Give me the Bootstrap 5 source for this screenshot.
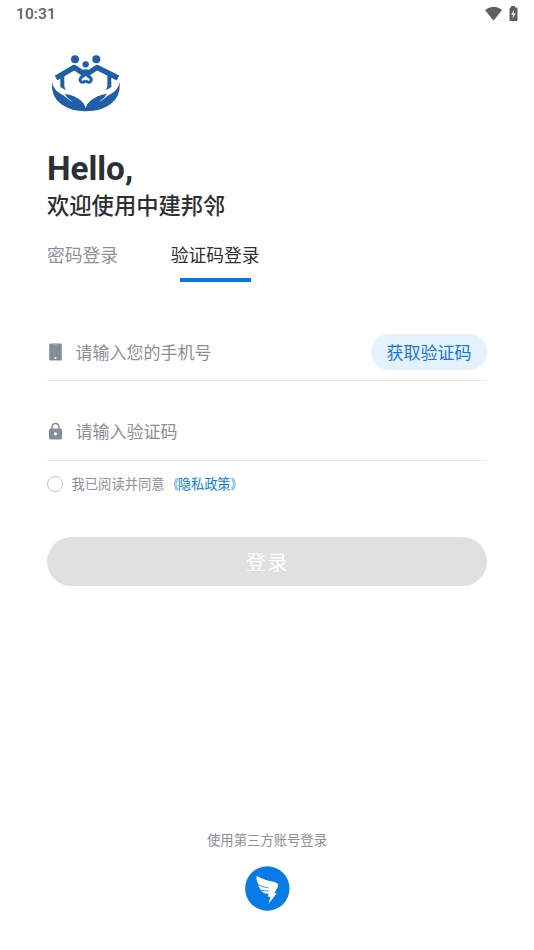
<!DOCTYPE html>
<html lang="zh-CN">
<head>
<meta charset="utf-8">
<meta name="viewport" content="width=device-width, initial-scale=1">
<title>登录</title>
<link href="https://cdn.jsdelivr.net/npm/bootstrap@5.3.0/dist/css/bootstrap.min.css" rel="stylesheet">
<style>
body{font-family:Roboto,"Noto Sans CJK SC",sans-serif;color:#2d2f35;background:#fff}
.screen{height:950px;overflow:hidden}
.status{height:28px;padding:0 15px 0 16px;color:#5f5f5f;font-size:15.5px;font-weight:500;letter-spacing:.1px}
.status .clock{padding-top:2px}
.content-area{padding:22px 47px 0}
.logo{width:77px;height:65px;display:block}
.hello{font-size:33.3px;font-weight:700;line-height:42px;margin-top:33px}
.welcome{font-size:22.3px;font-weight:500;line-height:32px}
.tabs{margin-top:18px;gap:52.6px}
.tab-btn{font-size:17.8px;line-height:32px;height:42px;color:#8a919d;white-space:nowrap}
.tab-btn.active{color:#2d2f35}
.tab-btn.active::after{content:"";display:block;width:71px;height:4px;margin:6px auto 0;background:#0a76e0}
.field{height:57px;border-bottom:1.5px solid #e9eaec}
.phone-field{margin-top:42px}
.code-field{margin-top:23px}
.field svg{width:18px;height:20px;flex:none}
.field input{font-size:17px;line-height:24px;margin-left:10.5px;padding:2px 0 0;color:#2d2f35}
.code-field input{padding-top:0}
.field input::placeholder{color:#8a8f98;opacity:1}
.field input:focus{box-shadow:none}
.code-btn,.code-btn:hover{width:116px;height:36px;padding:2px 0 0;font-size:17px;line-height:24px;color:#1677d8;background:#e5f1fd;white-space:nowrap}
.agree{height:20px;font-size:13.3px;line-height:20px;margin-top:13px;color:#8a8f98}
.agree-text{padding-top:1px}
.ring{width:16px;height:16px;border:1.5px solid #c3c5c8;margin-right:8.5px}
.policy{color:#0a7ce6;padding-top:1px;letter-spacing:-.1px}
.quote{display:inline-block;transform:scaleX(.72);transform-origin:right}
.quote-end{transform-origin:left}
.login-btn,.login-btn:disabled{height:49px;margin-top:43px;padding:2px 0 0 1px;font-size:20px;font-weight:400;letter-spacing:1.5px;color:#fff;background:#e0e0e0;border:0;opacity:1}
.third{padding-bottom:39px;font-size:13.35px;line-height:20px;color:#8a8f98}
.ding{width:45px;height:45px;margin-top:15px}
</style>
</head>
<body>
<div class="screen d-flex flex-column">
  <header class="status d-flex align-items-center justify-content-between">
    <span class="clock">10:31</span>
    <span class="d-flex align-items-center">
      <svg width="18" height="15" viewBox="0 0 18 15" fill="#5f5f5f" class="me-1"><path d="M0 3Q9-3.400 17 3L8.500 13.800Z"/></svg>
      <svg width="12" height="17" viewBox="0 0 12 17"><path d="M4 0h4v1.500h1.500q1 0 1 1V14q0 1-1 1h-6q-1 0-1-1V2.500q0-1 1-1H4Z" fill="#5f5f5f"/><path d="M7.300 3.500 4.200 8.700h2l-.8 4 3.200-5.200h-2Z" fill="#fff"/></svg>
    </span>
  </header>
  <main class="content-area">
    <svg class="logo" viewBox="21 15 231 195" fill="#1f5fa5" aria-label="logo">
      <circle cx="105" cy="43" r="12"/><circle cx="169" cy="43" r="12"/><circle cx="137" cy="58" r="9.500"/>
      <g fill="none" stroke="#1f5fa5" stroke-linejoin="round">
        <path d="M48 99L103 67L135 89" stroke-width="16"/>
        <path d="M234 99L171 67L139 89" stroke-width="16"/>
        <path d="M132 84L150 97Q158 105 150 111Q144 114 137 107" stroke-width="9"/>
        <path d="M142 84L124 97Q116 105 124 111Q130 114 137 107" stroke-width="9"/>
      </g>
      <path d="M61 92H73V124L77 136L61 126ZM202 92H214V126L198 136L202 124Z"/>
      <path d="M121 78Q137 67 154 78L138 93Z"/>
      <path d="M36 110Q40 132 57 143Q74 151 90 168Q80 160 73 146Q106 151 122 166Q133 175 137 189Q141 175 153 166Q169 151 202 146Q195 160 185 168Q201 151 218 143Q235 132 239 110Q243 155 211 178Q183 199 137 199Q92 199 64 178Q32 155 36 110Z"/>
      <path d="M73 146Q80 160 95 169" fill="none" stroke="#fff" stroke-width="2"/>
      <path d="M202 146Q195 160 180 169" fill="none" stroke="#fff" stroke-width="2"/>
    </svg>
    <h1 class="hello mb-0">Hello,</h1>
    <h2 class="welcome mb-0">欢迎使用中建邦邻</h2>
    <nav class="tabs d-flex">
      <a class="tab-btn text-decoration-none" href="#">密码登录</a>
      <a class="tab-btn active text-decoration-none" href="#">验证码登录</a>
    </nav>
    <form>
      <div class="field d-flex align-items-center phone-field">
        <svg viewBox="0 0 18 20"><path d="M3.500 1.500h10q1.300 0 1.300 1.300v14.400q0 1.300-1.300 1.300h-10q-1.300 0-1.300-1.300V2.800q0-1.300 1.300-1.300Z" fill="#858d9b"/><path d="M6.500 2h4" stroke="#b5bac2"/><circle cx="8.500" cy="16" r="1" fill="#fff"/></svg>
        <input class="form-control border-0 bg-transparent" type="tel" placeholder="请输入您的手机号">
        <button class="code-btn btn rounded-pill border-0 flex-shrink-0" type="button">获取验证码</button>
      </div>
      <div class="field d-flex align-items-center code-field">
        <svg viewBox="0 0 18 20"><path d="M5 7.500V5a3.500 3.500 0 0 1 7 0V7.500" fill="none" stroke="#858d9b" stroke-width="1.500"/><rect x="2" y="6.500" width="13" height="11" rx="1.500" fill="#858d9b"/><circle cx="8.500" cy="11.800" r="1.600" fill="#fff"/></svg>
        <input class="form-control border-0 bg-transparent" type="text" placeholder="请输入验证码">
      </div>
      <div class="agree d-flex align-items-center"><span class="ring rounded-circle"></span><span class="agree-text">我已阅读并同意</span><a class="policy text-decoration-none" href="#"><span class="quote">《</span>隐私政策<span class="quote quote-end">》</span></a></div>
      <button class="login-btn btn rounded-pill w-100" type="button" disabled>登录</button>
    </form>
  </main>
  <footer class="third mt-auto d-flex flex-column align-items-center">
    <span>使用第三方账号登录</span>
    <svg class="ding" viewBox="0 0 45 45"><circle cx="22.300" cy="22.500" r="22.200" fill="#087ae5"/><path d="M11.500 10Q20 14.500 29.500 16Q33.800 17 33 20.300Q32 23.500 29.200 27.200L31.800 27.300L23.500 38L25.400 30.800H22.500L24 27.500Q18.500 28.500 16 24.200Q13.500 21.500 13.200 18.500Q11 14 11.500 10Z" fill="#fff"/><path d="M13 18.500 Q18 21.300 23.500 21.800M16 24.300Q20 25.300 23.500 24.800" fill="none" stroke="#087ae5" stroke-width=".8"/></svg>
  </footer>
</div>
<script src="https://cdn.jsdelivr.net/npm/bootstrap@5.3.0/dist/js/bootstrap.bundle.min.js"></script>
</body>
</html>
